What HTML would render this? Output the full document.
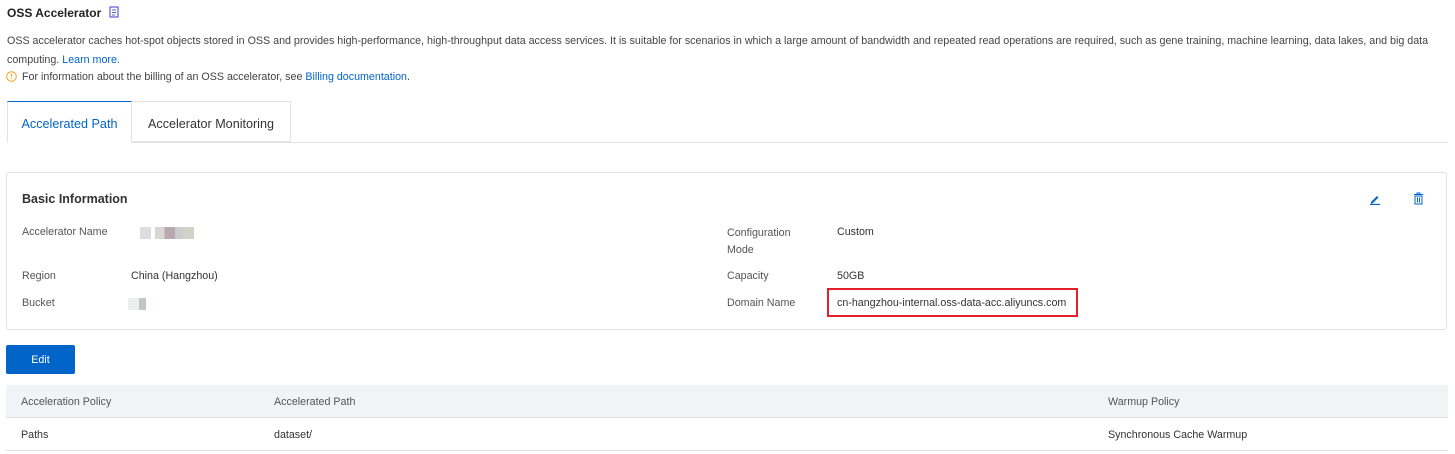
<!DOCTYPE html><html><head><style>
body{margin:0;width:1455px;height:454px;background:#fff;font-family:"Liberation Sans",sans-serif;font-size:10.7px;color:#333;position:relative;overflow:hidden}
.a{position:absolute;white-space:nowrap}
a{color:#0064c8;text-decoration:none}
.lbl{color:#555}
</style></head><body>
<div class="a" style="left:7px;top:6px;font-size:12px;font-weight:bold;color:#222">OSS Accelerator</div>
<svg class="a" style="left:109px;top:6px" width="11" height="12"><rect x="1" y="1" width="8" height="10" fill="none" stroke="#5a5fd6" stroke-width="1.2"/><path d="M3 4h4M3 6.5h4M3 9h3" stroke="#5a5fd6"/></svg>
<div class="a" style="left:7px;top:32px;line-height:19px;white-space:normal;width:1445px;color:#444">OSS accelerator caches hot-spot objects stored in OSS and provides high-performance, high-throughput data access services. It is suitable for scenarios in which a large amount of bandwidth and repeated read operations are required, such as gene training, machine learning, data lakes, and big data computing. <a>Learn more.</a></div>
<svg class="a" style="left:6px;top:71px" width="11" height="11"><circle cx="5.5" cy="5.5" r="4.8" fill="none" stroke="#f5a623"/><path d="M5.5 2.8v3.3M5.5 7.3v1" stroke="#f5a623"/></svg>
<div class="a" style="left:22px;top:71px;color:#444">For information about the billing of an OSS accelerator, see <a>Billing documentation</a>.</div>
<div class="a" style="left:7px;top:142px;width:1441px;border-top:1px solid #e3e3e3"></div>
<div class="a" style="left:7px;top:101px;width:125px;height:42px;border:1px solid #e3e3e3;border-top:1px solid #0064c8;border-bottom:1px solid #fff;box-sizing:border-box;color:#0064c8;font-size:12.6px;text-align:center;line-height:44px">Accelerated Path</div>
<div class="a" style="left:132px;top:101px;width:159px;height:41px;border:1px solid #e3e3e3;border-left:none;box-sizing:border-box;font-size:12.6px;text-align:center;line-height:44px;color:#333">Accelerator Monitoring</div>
<div class="a" style="left:6px;top:172px;width:1441px;height:158px;border:1px solid #e3e3e3;border-radius:3px;box-sizing:border-box"></div>
<div class="a" style="left:22px;top:192px;font-size:12.5px;font-weight:bold;color:#333">Basic Information</div>
<svg class="a" style="left:1369px;top:193px" width="12" height="12"><path d="M2 9l6-6 1.5 1.5-6 6H2z" fill="#0064c8"/><path d="M1 11.5h10" stroke="#0064c8" stroke-width="1.3"/></svg>
<svg class="a" style="left:1413px;top:192px" width="11" height="13"><path d="M1 2.5h9M4 2.5V1h3v1.5" stroke="#0064c8" fill="none"/><rect x="2" y="4" width="7" height="8" fill="none" stroke="#0064c8"/><path d="M4.5 5.5v5M6.5 5.5v5" stroke="#0064c8"/></svg>
<div class="a lbl" style="left:22px;top:226px">Accelerator Name</div>
<div class="a" style="left:140px;top:227px;width:54px;height:12px;background:linear-gradient(90deg,#ddd 0 20%,#fff 20% 28%,#d8d8d0 28% 45%,#b8a8b0 45% 65%,#ccc 65% 80%,#d0d4c8 80%)"></div>
<div class="a lbl" style="left:22px;top:270px">Region</div>
<div class="a" style="left:131px;top:270px">China (Hangzhou)</div>
<div class="a lbl" style="left:22px;top:297px">Bucket</div>
<div class="a" style="left:128px;top:298px;width:18px;height:12px;background:linear-gradient(90deg,#eee 0 60%,#bfc6c4 60%)"></div>
<div class="a lbl" style="left:727px;top:225px;line-height:17px">Configuration<br>Mode</div>
<div class="a" style="left:837px;top:226px">Custom</div>
<div class="a lbl" style="left:727px;top:270px">Capacity</div>
<div class="a" style="left:837px;top:270px">50GB</div>
<div class="a lbl" style="left:727px;top:297px">Domain Name</div>
<div class="a" style="left:827px;top:288px;width:251px;height:29px;border:2px solid #e0202a;box-sizing:border-box"></div>
<div class="a" style="left:837px;top:297px">cn-hangzhou-internal.oss-data-acc.aliyuncs.com</div>
<div class="a" style="left:6px;top:345px;width:69px;height:29px;background:#0064c8;color:#fff;text-align:center;line-height:30px;border-radius:2px">Edit</div>
<div class="a" style="left:6px;top:385px;width:1442px;height:33px;background:#f1f3f6;border-bottom:1px solid #e3e3e3;box-sizing:border-box"></div>
<div class="a" style="left:6px;top:450px;width:1442px;border-top:1px solid #e3e3e3"></div>
<div class="a lbl" style="left:21px;top:396px">Acceleration Policy</div>
<div class="a lbl" style="left:274px;top:396px">Accelerated Path</div>
<div class="a lbl" style="left:1108px;top:396px">Warmup Policy</div>
<div class="a" style="left:21px;top:429px">Paths</div>
<div class="a" style="left:274px;top:429px">dataset/</div>
<div class="a" style="left:1108px;top:429px">Synchronous Cache Warmup</div>
</body></html>
